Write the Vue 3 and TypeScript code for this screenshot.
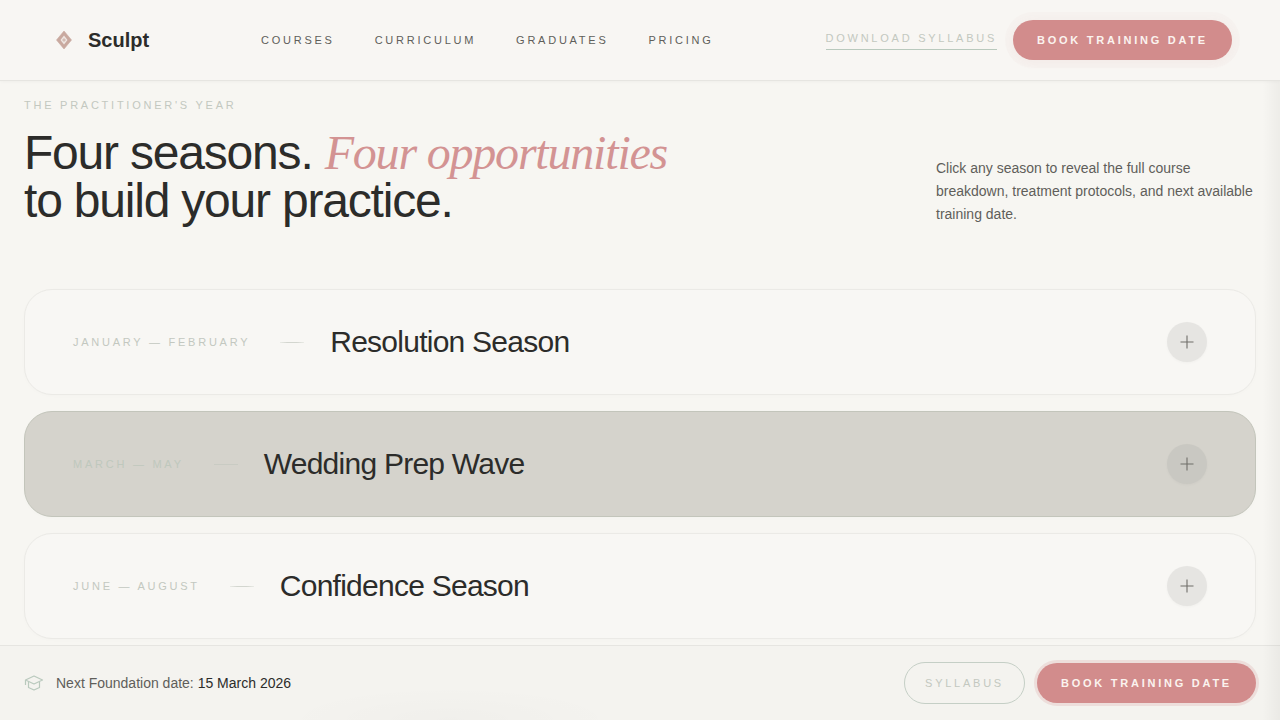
<script setup lang="ts">
interface Season {
  months: string
  title: string
  active?: boolean
}
const navItems: string[] = ['Courses', 'Curriculum', 'Graduates', 'Pricing']
const seasons: Season[] = [
  { months: 'January — February', title: 'Resolution Season' },
  { months: 'March — May', title: 'Wedding Prep Wave', active: true },
  { months: 'June — August', title: 'Confidence Season' },
]
</script>

<template>
  <div class="page">
    <header class="header">
      <a class="brand" href="#">
        <svg class="brand-mark" viewBox="0 0 24 24" width="24" height="24" fill="none" aria-hidden="true">
          <path d="M12 3 L19.500 12 L12 21 L4.500 12 Z" fill="#c9a99f" stroke="#c9a99f" stroke-width="0.6" stroke-linejoin="round" />
          <path d="M12 7.500 L15.500 12 L12 16.500 L8.500 12 Z" fill="#efe7e2" />
          <path d="M10 12 L12 10 L14 12 L12 14 Z" fill="#d3bcb4" />
        </svg>
        <span class="brand-name">Sculpt</span>
      </a>
      <nav class="nav">
        <a v-for="item in navItems" :key="item" href="#">{{ item }}</a>
      </nav>
      <div class="header-actions">
        <a class="download" href="#">Download Syllabus</a>
        <button class="cta cta-header" type="button">Book Training Date</button>
      </div>
    </header>

    <main class="main">
      <p class="eyebrow">The Practitioner's Year</p>
      <div class="intro">
        <h1>Four seasons. <em>Four opportunities</em><br />to build your practice.</h1>
        <p class="lede">Click any season to reveal the full course breakdown, treatment protocols, and next available training date.</p>
      </div>
      <div class="seasons">
        <article v-for="s in seasons" :key="s.title" class="season" :class="{ active: s.active }">
          <span class="months">{{ s.months }}</span>
          <span class="rule"></span>
          <h2>{{ s.title }}</h2>
          <span class="toggle">
            <svg viewBox="0 0 14 14" width="14" height="14" fill="none" aria-hidden="true">
              <path d="M7 .5v13M.5 7h13" stroke="#6f6e69" stroke-width="1.1" />
            </svg>
          </span>
        </article>
      </div>
    </main>

    <footer class="bar">
      <div class="next">
        <svg viewBox="0 0 20 20" width="20" height="20" fill="none" aria-hidden="true">
          <path d="M1.5 7 10 3l8.500 4-8.500 4z" stroke="#b9c9bd" stroke-width="1.2" stroke-linejoin="round" />
          <path d="M4.500 9v5.500l5.500 2.500 5.500-2.500V9M1.500 7v5" stroke="#b9c9bd" stroke-width="1.2" stroke-linejoin="round" />
        </svg>
        <span>Next Foundation date: <strong>15 March 2026</strong></span>
      </div>
      <div class="bar-actions">
        <button class="ghost" type="button">Syllabus</button>
        <button class="cta cta-bar" type="button">Book Training Date</button>
      </div>
    </footer>
    <div class="edge"></div>
  </div>
</template>

<style>
html, body { margin: 0; background: #f7f6f2; }
</style>

<style scoped>
* { box-sizing: border-box; }
.page {
  position: relative;
  width: 1280px;
  height: 720px;
  overflow: hidden;
  background: #f7f6f2;
  color: #2c2c2a;
  font-family: "Liberation Sans", Arial, sans-serif;
}
.header {
  height: 81px;
  display: flex;
  align-items: center;
  padding: 0 48px 0 52px;
  background: #f8f6f3;
  border-bottom: 1px solid #e6e5e1;
  box-shadow: 0 1px 3px rgba(0, 0, 0, .03);
}
.brand {
  display: flex;
  align-items: center;
  gap: 12px;
  width: 209px;
  color: #2c2c2a;
  text-decoration: none;
}
.brand-name { font-size: 20px; font-weight: 700; line-height: 24px; }
.nav { display: flex; gap: 40px; }
.nav a {
  font-size: 11px;
  letter-spacing: .25em;
  text-transform: uppercase;
  color: #5f5e5a;
  text-decoration: none;
}
.header-actions { margin-left: auto; display: flex; align-items: center; gap: 16px; }
.download {
  font-size: 11px;
  letter-spacing: .25em;
  text-transform: uppercase;
  color: #c3c8c0;
  text-decoration: none;
  padding-bottom: 5px;
  margin-top: 1px;
  border-bottom: 1px solid #b9c9bd;
}
button { font-family: inherit; cursor: pointer; }
.cta {
  width: 219px;
  height: 40px;
  border: 0;
  border-radius: 20px;
  background: #d28c8c;
  color: #fbf3ef;
  font-size: 11px;
  font-weight: 700;
  letter-spacing: .25em;
  text-transform: uppercase;
}
.cta-header { box-shadow: 0 0 0 8px rgba(210, 140, 140, .035), 0 2px 10px rgba(210, 140, 140, .07); }
.cta-bar { box-shadow: 0 0 0 3px rgba(210, 140, 140, .2); }
.main { padding: 0 24px; }
.eyebrow {
  margin: 0;
  padding-top: 17px;
  font-size: 11px;
  line-height: 14px;
  letter-spacing: .25em;
  text-transform: uppercase;
  color: #c3c8c0;
}
.intro {
  display: flex;
  justify-content: space-between;
  align-items: flex-end;
  margin-top: 17px;
  height: 96px;
}
h1 {
  margin: 0;
  font-size: 48px;
  font-weight: 400;
  line-height: 48px;
  letter-spacing: -.025em;
  color: #2c2c2a;
}
h1 em { font-family: "Liberation Serif", serif; font-style: italic; color: #d39393; }
.lede {
  margin: 0 0 -1px;
  width: 320px;
  font-size: 14px;
  line-height: 23px;
  color: #5f5e5a;
}
.seasons { display: flex; flex-direction: column; gap: 16px; margin-top: 64px; }
.season {
  display: flex;
  align-items: center;
  height: 106px;
  padding: 0 48px;
  border: 1px solid #ebeae6;
  border-radius: 28px;
  background: #f8f7f4;
  box-shadow: 0 1px 4px rgba(0, 0, 0, .015);
}
.season.active { background: #d5d3cc; border-color: #c3c5bb; }
.months {
  font-size: 11px;
  letter-spacing: .25em;
  text-transform: uppercase;
  color: #c3c8c0;
}
.active .months { color: #bfc8bd; }
.rule {
  width: 24px;
  height: 1px;
  margin: 0 26px 0 30px;
  background: linear-gradient(to right, rgba(200, 205, 196, .3), #d3d6cf 30%, #d3d6cf 70%, rgba(200, 205, 196, .3));
}
.active .rule { background: #c9cbc3; }
h2 { margin: 0; font-size: 30px; font-weight: 400; letter-spacing: -.025em; color: #2c2c2a; }
.toggle {
  margin-left: auto;
  width: 40px;
  height: 40px;
  border-radius: 50%;
  background: #e6e5e2;
  box-shadow: 0 1px 3px rgba(0, 0, 0, .03);
  display: flex;
  align-items: center;
  justify-content: center;
}
.active .toggle { background: #c9c8c2; }
.bar {
  position: absolute;
  left: 0;
  right: 0;
  bottom: 0;
  height: 75px;
  display: flex;
  align-items: center;
  justify-content: space-between;
  padding: 0 24px;
  background:
    radial-gradient(170px 34px at 450px 100%, rgba(0, 0, 0, .014), rgba(0, 0, 0, 0)),
    #f4f3ef;
  border-top: 1px solid #e6e5e1;
}
.next { display: flex; align-items: center; gap: 12px; font-size: 14px; color: #5f5e5a; }
.next strong { font-weight: 400; color: #2c2c2a; }
.bar-actions { display: flex; align-items: center; gap: 12px; }
.ghost {
  width: 121px;
  height: 42px;
  border: 1px solid #c5cfc6;
  border-radius: 21px;
  background: transparent;
  color: #c3c8c0;
  font-size: 11px;
  font-weight: 400;
  letter-spacing: .25em;
  text-transform: uppercase;
}
.edge {
  position: absolute;
  top: 81px;
  right: 0;
  bottom: 0;
  width: 18px;
  pointer-events: none;
  background: linear-gradient(to right, rgba(0, 0, 0, 0), rgba(0, 0, 0, .04));
}
</style>
